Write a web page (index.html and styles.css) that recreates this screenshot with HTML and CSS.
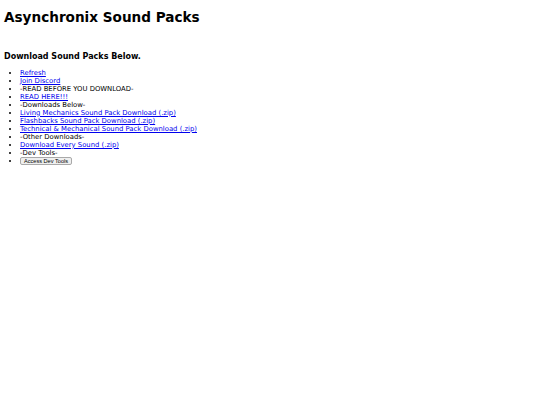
FILE: index.html
```html
<!DOCTYPE html>
<html>
<head>
<meta charset="utf-8">
<title>Asynchronix Sound Packs</title>
<link rel="stylesheet" href="styles.css">
</head>
<body>
<h1 class="title">Asynchronix Sound Packs</h1>
<h3 class="subtitle">Download Sound Packs Below.</h3>
<ul class="links">
<li><a href="#">Refresh</a></li>
<li><a href="#">Join Discord</a></li>
<li>-READ BEFORE YOU DOWNLOAD-</li>
<li><a href="#">READ HERE!!!</a></li>
<li>-Downloads Below-</li>
<li><a href="#">Living Mechanics Sound Pack Download (.zip)</a></li>
<li><a href="#">Flashbacks Sound Pack Download (.zip)</a></li>
<li><a href="#">Technical &amp; Mechanical Sound Pack Download (.zip)</a></li>
<li>-Other Downloads-</li>
<li><a href="#">Download Every Sound (.zip)</a></li>
<li>-Dev Tools-</li>
<li><button class="dev-btn" type="button">Access Dev Tools</button></li>
</ul>
</body>
</html>
```
FILE: styles.css
```css
body {
  margin: 0;
  padding: 4px;
  font-family: "DejaVu Sans", Verdana, sans-serif;
  color: #000;
  background: #fff;
}
.title {
  font-size: 13.6px;
  line-height: 16px;
  margin: 4.5px 0 0;
}
.subtitle {
  font-size: 8px;
  line-height: 9px;
  margin: 27.2px 0 0;
}
.links {
  margin: 8px 0 0;
  padding-left: 16px;
  font-size: 6.85px;
  line-height: 8px;
}
.links a {
  color: #0000ee;
}
.dev-btn {
  font-family: "Liberation Sans", Arial, sans-serif;
  font-size: 5.6px;
  line-height: 6px;
  padding: 0 3px;
  margin: 0;
  background: #efefef;
  border: 1px solid #a9a9a9;
  border-radius: 2px;
  color: #000;
}
```
